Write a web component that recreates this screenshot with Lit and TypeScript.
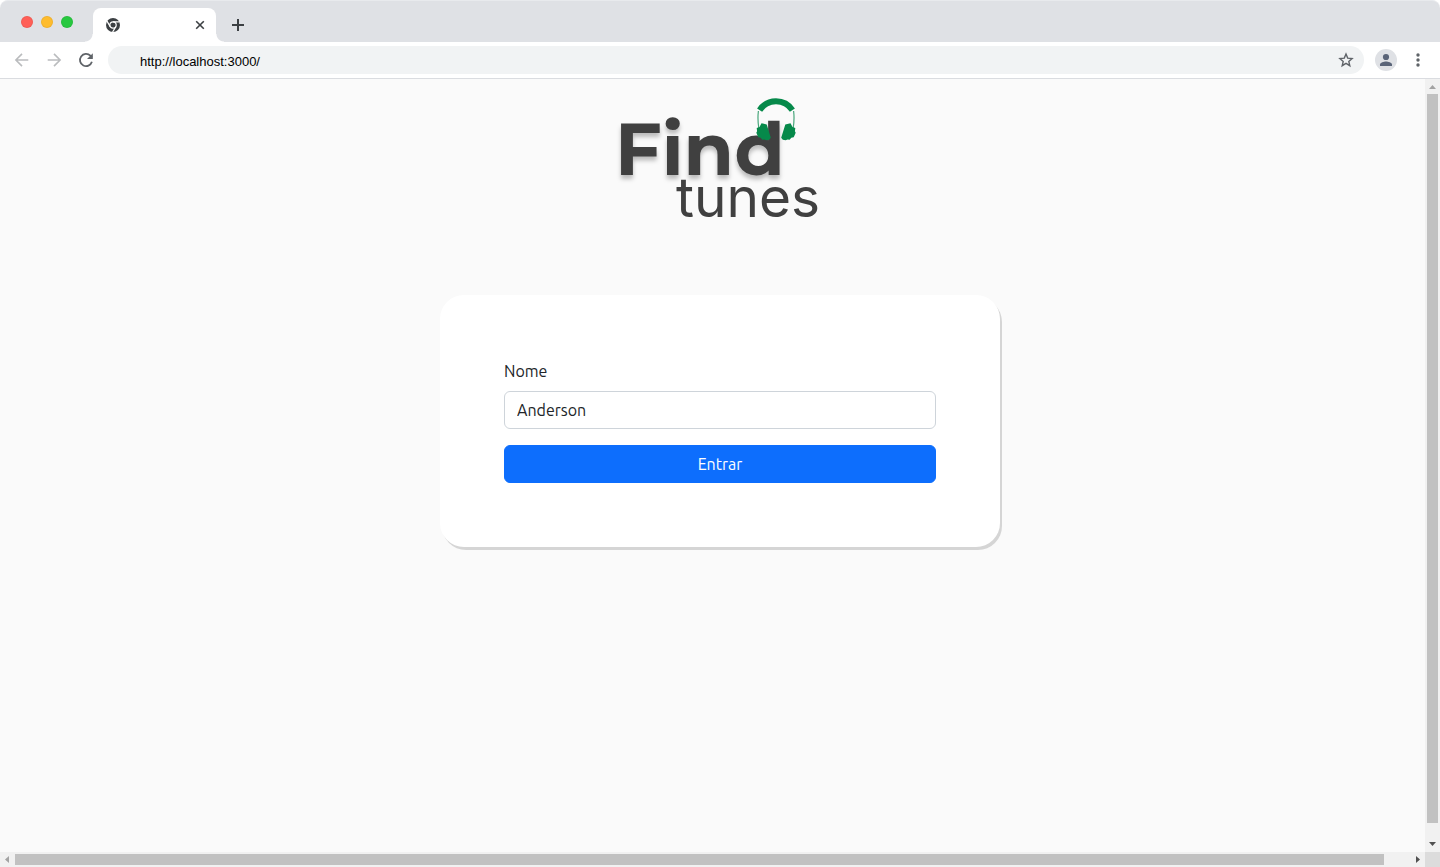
import { LitElement, html, css } from "lit";
import { customElement, state } from "lit/decorators.js";

@customElement("browser-tabs")
class BrowserTabs extends LitElement {
  static styles = css`
    :host { display: block; background: #fff; }
    .strip {
      display: flex; align-items: flex-end; height: 42px; box-sizing: border-box;
      background: #dfe1e5; border-radius: 8px 8px 0 0; border-top: 1px solid #e8eaed;
    }
    .lights { display: flex; gap: 8px; padding: 0 20px 14px 21px; }
    .light { width: 12px; height: 12px; border-radius: 50%; box-shadow: inset 0 0 0 1px rgba(0, 0, 0, .06); }
    .red { background: #ff5f57; }
    .amber { background: #febc2e; }
    .green { background: #28c840; }
    .tab {
      display: flex; align-items: center; justify-content: space-between; position: relative;
      width: 123px; height: 34px; padding: 0 11px 0 13px; box-sizing: border-box;
      background: #fff; border-radius: 8px 8px 0 0;
    }
    .tab::before, .tab::after { content: ""; position: absolute; bottom: 0; width: 8px; height: 8px; }
    .tab::before { right: 100%; background: radial-gradient(circle at 0 0, transparent 7px, #fff 8px); }
    .tab::after { left: 100%; background: radial-gradient(circle at 100% 0, transparent 7px, #fff 8px); }
    button { display: flex; padding: 0; border: 0; background: none; }
    .add { padding: 0 0 10px 15px; }
    svg { display: block; }
  `;

  render() {
    return html`
      <div class="strip">
        <div class="lights">
          <span class="light red"></span><span class="light amber"></span><span class="light green"></span>
        </div>
        <div class="tab">
          <svg width="14" height="14" viewBox="0 0 14 14">
            <circle cx="7" cy="7" r="7" fill="#3c4043"/>
            <circle cx="7" cy="7" r="3.2" fill="none" stroke="#fff" stroke-width="1.2"/>
            <path d="M7 3.8H13.4M4.2 8.6 1 3.1M9.8 8.6 6.6 14" stroke="#fff" stroke-width="1.2"/>
          </svg>
          <button aria-label="Close tab">
            <svg width="10" height="10" viewBox="0 0 10 10"><path d="M1.2 1.2l7.6 7.6M8.8 1.2 1.2 8.8" stroke="#3c4043" stroke-width="1.6"/></svg>
          </button>
        </div>
        <button class="add" aria-label="New tab">
          <svg width="14" height="14" viewBox="0 0 14 14"><path d="M7 1v12M1 7h12" stroke="#3c4043" stroke-width="2"/></svg>
        </button>
      </div>
    `;
  }
}

@customElement("browser-toolbar")
class BrowserToolbar extends LitElement {
  static styles = css`
    :host { display: block; }
    .bar {
      display: flex; align-items: center; gap: 12px; height: 37px; box-sizing: border-box;
      padding: 0 12px; background: #fff; border-bottom: 1px solid #dadce0;
    }
    button { display: flex; justify-content: center; padding: 0; border: 0; background: none; width: 20px; }
    .address {
      display: flex; align-items: center; flex: 1; height: 28px; padding: 0 8px 0 32px;
      border-radius: 14px; background: #f1f3f4;
    }
    .address input {
      flex: 1; min-width: 0; padding: 4px 0 0; border: 0; outline: 0; background: none;
      font: 13px/18px "Liberation Sans", Arial, sans-serif; color: #000;
    }
    .profile { width: 22px; height: 22px; border-radius: 50%; background: #dfe1e5; overflow: hidden; }
    .bar .profile { margin: 0 -1px; }
    svg { display: block; }
  `;

  render() {
    return html`
      <div class="bar">
        <button aria-label="Back">
          <svg width="16" height="16" viewBox="0 0 16 16" fill="none" stroke="#babcbe" stroke-width="1.6"><path d="M14.3 8H2.4M8 1.9 1.9 8 8 14.1"/></svg>
        </button>
        <button aria-label="Forward">
          <svg width="16" height="16" viewBox="0 0 16 16" fill="none" stroke="#babcbe" stroke-width="1.6"><path d="M1.7 8h11.9M8 1.9 14.1 8 8 14.1"/></svg>
        </button>
        <button aria-label="Reload">
          <svg width="16" height="16" viewBox="0 0 16 16"><path d="M13.9 9.8A6.1 6.1 0 1 1 12.4 3.7L14 5.3" fill="none" stroke="#5f6368" stroke-width="1.8"/><path d="M14.8 1.2V7H9z" fill="#5f6368"/></svg>
        </button>
        <div class="address">
          <input aria-label="Address" value="http://localhost:3000/">
          <button aria-label="Bookmark">
            <svg width="16" height="16" viewBox="0 0 16 16"><path d="M8 2l1.7 4.1 4.4.4-3.3 2.9 1 4.3L8 11.4l-3.8 2.3 1-4.3-3.3-2.9 4.4-.4z" fill="none" stroke="#5f6368" stroke-width="1.4"/></svg>
          </button>
        </div>
        <button class="profile" aria-label="Profile">
          <svg width="22" height="22" viewBox="0 0 22 22" fill="#5a6478"><circle cx="11" cy="8" r="3.1"/><path d="M5 17v-1.6c0-2 4-3 6-3s6 1 6 3V17z"/></svg>
        </button>
        <button aria-label="Menu">
          <svg width="4" height="16" viewBox="0 0 4 16" fill="#5f6368"><circle cx="2" cy="3" r="1.7"/><circle cx="2" cy="8" r="1.7"/><circle cx="2" cy="13" r="1.7"/></svg>
        </button>
      </div>
    `;
  }
}

@customElement("login-page")
class LoginPage extends LitElement {
  static styles = css`
    :host { display: block; overflow: hidden; background: #fafafa; }
    main {
      display: flex; flex-direction: column; align-items: center; gap: 72px;
      width: 100vw; padding-top: 16px; box-sizing: border-box;
      font: 16px/24px Ubuntu, "Noto Sans", sans-serif; color: #212529;
    }
    .logo { display: block; overflow: visible; }
    .logo text { font-family: Inter, sans-serif; fill: #404040; }
    .logo .find {
      font-family: Montserrat, Inter, sans-serif; font-size: 73px; font-weight: 700;
      filter: drop-shadow(0 4px 2px rgba(0, 0, 0, .25));
    }
    .tunes { font-size: 55px; font-weight: 400; }
    form {
      display: flex; flex-direction: column; width: 560px; max-width: 100%; box-sizing: border-box;
      padding: 64px; border-radius: 24px; background: #fff; box-shadow: 2px 3px 0 #d5d5d5;
    }
    label { margin-bottom: 8px; }
    input, button { font: inherit; border-radius: 6px; padding: 6px 12px; }
    input { border: 1px solid #ced4da; background: #fff; color: #212529; margin-bottom: 16px; outline: 0; }
    button { border: 1px solid #0d6efd; background: #0d6efd; color: #fff; }
  `;

  @state() name = "Anderson";

  render() {
    return html`
      <main>
        <svg class="logo" width="200" height="128" viewBox="0 0 200 128" role="img" aria-label="Find tunes">
          <text class="find" x="-5" y="80">Find</text>
          <text class="tunes" x="56" y="122">tunes</text>
          <g fill="#06894a">
            <path d="M138.4 16C137.8 21 137.8 27 138.8 33M173.6 16C174.2 21 174.2 27 173.2 33" fill="none" stroke="#48a67b" stroke-width="1.2"/>
            <path d="M139.6 15.2A19.6 19.6 0 0 1 172.4 15.2" fill="none" stroke="#06894a" stroke-width="6"/>
            <path d="M141.5 28.2l5.2 1.4 4.1 13.1-1.6 2-2.8.6-2-.9-2 .4-1.7-2-2.4-.6-2-4.4.8-1.6-.4-3.2 2.8-1z"/>
            <path d="M170.5 28.2l-5.2 1.4-4.1 13.1 1.6 2 2.8.6 2-.9 2 .4 1.7-2 2.4-.6 2-4.4-.8-1.6.4-3.2-2.8-1z"/>
          </g>
        </svg>
        <form @submit=${(e: Event) => e.preventDefault()}>
          <label for="name">Nome</label>
          <input id="name" type="text" .value=${this.name}
            @input=${(e: Event) => { this.name = (e.target as HTMLInputElement).value; }}>
          <button type="submit">Entrar</button>
        </form>
      </main>
    `;
  }
}

@customElement("app-root")
class AppRoot extends LitElement {
  static styles = css`
    :host { display: flex; flex-direction: column; height: 100vh; overflow: hidden; }
    .view { flex: 1; min-height: 0; display: grid; grid-template: minmax(0, 1fr) 15px / minmax(0, 1fr) 15px; }
    .track { display: flex; background: #f1f1f1; }
    .vertical { flex-direction: column; }
    .thumb { background: #c1c1c1; }
    .vertical .thumb { flex: 729; margin: 0 2px; }
    .vertical .rest { flex: 14; }
    .horizontal .thumb { flex: 1369; margin: 2px 0; }
    .horizontal .rest { flex: 26; }
    .corner { background: #dcdcdc; }
    .arrow { display: block; width: 15px; height: 15px; flex: none; }
    .off { fill: #a3a3a3; }
    .on { fill: #505050; }
  `;

  render() {
    return html`
      <browser-tabs></browser-tabs>
      <browser-toolbar></browser-toolbar>
      <div class="view">
        <login-page></login-page>
        <div class="track vertical">
          <svg class="arrow off" viewBox="0 0 15 15"><path d="M4 10 7.5 6 11 10z"/></svg>
          <div class="thumb"></div><div class="rest"></div>
          <svg class="arrow on" viewBox="0 0 15 15"><path d="M4 5 7.5 9 11 5z"/></svg>
        </div>
        <div class="track horizontal">
          <svg class="arrow off" viewBox="0 0 15 15"><path d="M9 4 5 7.5 9 11z"/></svg>
          <div class="thumb"></div><div class="rest"></div>
          <svg class="arrow on" viewBox="0 0 15 15"><path d="M6 4l4 3.5L6 11z"/></svg>
        </div>
        <div class="corner"></div>
      </div>
    `;
  }
}
